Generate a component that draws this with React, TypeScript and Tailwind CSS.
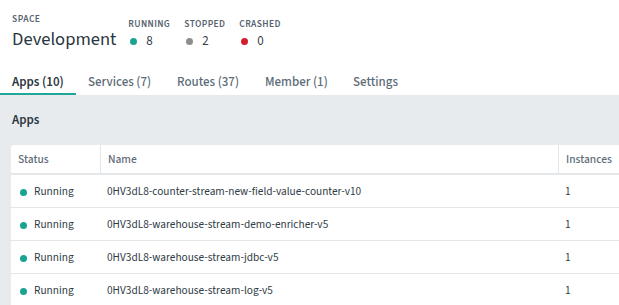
import React from "react";

const rows = [
  "0HV3dL8-counter-stream-new-field-value-counter-v10",
  "0HV3dL8-warehouse-stream-demo-enricher-v5",
  "0HV3dL8-warehouse-stream-jdbc-v5",
  "0HV3dL8-warehouse-stream-log-v5",
];

const tabs = [
  { label: "Apps (10)", w: "w-[76px]", active: true },
  { label: "Services (7)", w: "w-[89px]", active: false },
  { label: "Routes (37)", w: "w-[88px]", active: false },
  { label: "Member (1)", w: "w-[88px]", active: false },
  { label: "Settings", w: "w-[80px]", active: false },
];

function Stat({ label, value, dot, w }: { label: string; value: string; dot: string; w: string }) {
  return (
    <div className={`${w} flex flex-col`}>
      <div className="text-[9.5px] leading-[12px] font-semibold tracking-[0.04em] text-[#56636e]">{label}</div>
      <div className="mt-[2px] flex items-center h-[18px]">
        <span className={`ml-[2px] w-[7px] h-[7px] rounded-full ${dot}`} />
        <span className="ml-[9px] text-[13px] leading-[18px] text-[#2f3b45]">{value}</span>
      </div>
    </div>
  );
}

export default function App() {
  return (
    <div className="w-[619px] h-[305px] overflow-hidden bg-white flex flex-col [font-family:'Source_Sans_3','Source_Sans_Pro',Lato,sans-serif]">
      <div className="pl-3 pt-[13px] flex items-start">
        <div className="flex flex-col">
          <div className="text-[9.5px] leading-[12px] font-semibold tracking-[0.05em] text-[#56636e]">SPACE</div>
          <div className="mt-[2px] text-[18.5px] leading-[24px] text-[#2a3640]">Development</div>
        </div>
        <div className="ml-[12px] mt-[5px] flex">
          <Stat w="w-[56px]" label="RUNNING" value="8" dot="bg-[#1aa393]" />
          <Stat w="w-[55px]" label="STOPPED" value="2" dot="bg-[#8e8e8e]" />
          <Stat w="w-[60px]" label="CRASHED" value="0" dot="bg-[#d21f2d]" />
        </div>
      </div>

      <div className="mt-[12px] flex">
        {tabs.map((t) => (
          <div
            key={t.label}
            className={`${t.w} shrink-0 px-3 pt-[9px] pb-[1px] border-b-2 text-[13px] leading-[20px] whitespace-nowrap ${
              t.active
                ? "border-[#1fa797] text-[#2a3640] font-semibold"
                : "border-transparent text-[#5c6b77] font-medium"
            }`}
          >
            {t.label}
          </div>
        ))}
      </div>

      <div className="flex-1 bg-[#e8ebee] pt-[15px]">
        <div className="pl-3 text-[13px] leading-[20px] font-semibold text-[#2a3640]">Apps</div>
        <div className="mt-[15px] ml-[11px] w-[640px] bg-white rounded-tl-[3px]">
          <div className="flex h-[30px] border-b-2 border-[#e3e7ea] text-[11.5px] font-medium text-[#5e6c78]">
            <div className="w-[89px] pl-[7px] pt-[2px] flex items-center">Status</div>
            <div className="w-[458px] pl-[7px] pt-[2px] flex items-center border-l border-[#e3e7ea]">Name</div>
            <div className="flex-1 pl-[7px] pt-[2px] flex items-center border-l border-[#e3e7ea]">Instances</div>
          </div>
          {rows.map((name, i) => (
            <div
              key={name}
              className={`flex h-[33px] pt-[2px] text-[11.3px] text-[#2f3b45] ${i < rows.length - 1 ? "border-b border-[#e3e7ea]" : ""}`}
            >
              <div className="w-[89px] pl-[9px] flex items-center">
                <span className="w-[7px] h-[7px] rounded-full bg-[#1aa393]" />
                <span className="ml-[7px]">Running</span>
              </div>
              <div className="w-[458px] pl-[7px] flex items-center">{name}</div>
              <div className="flex-1 pl-[7px] flex items-center">1</div>
            </div>
          ))}
        </div>
      </div>
    </div>
  );
}
